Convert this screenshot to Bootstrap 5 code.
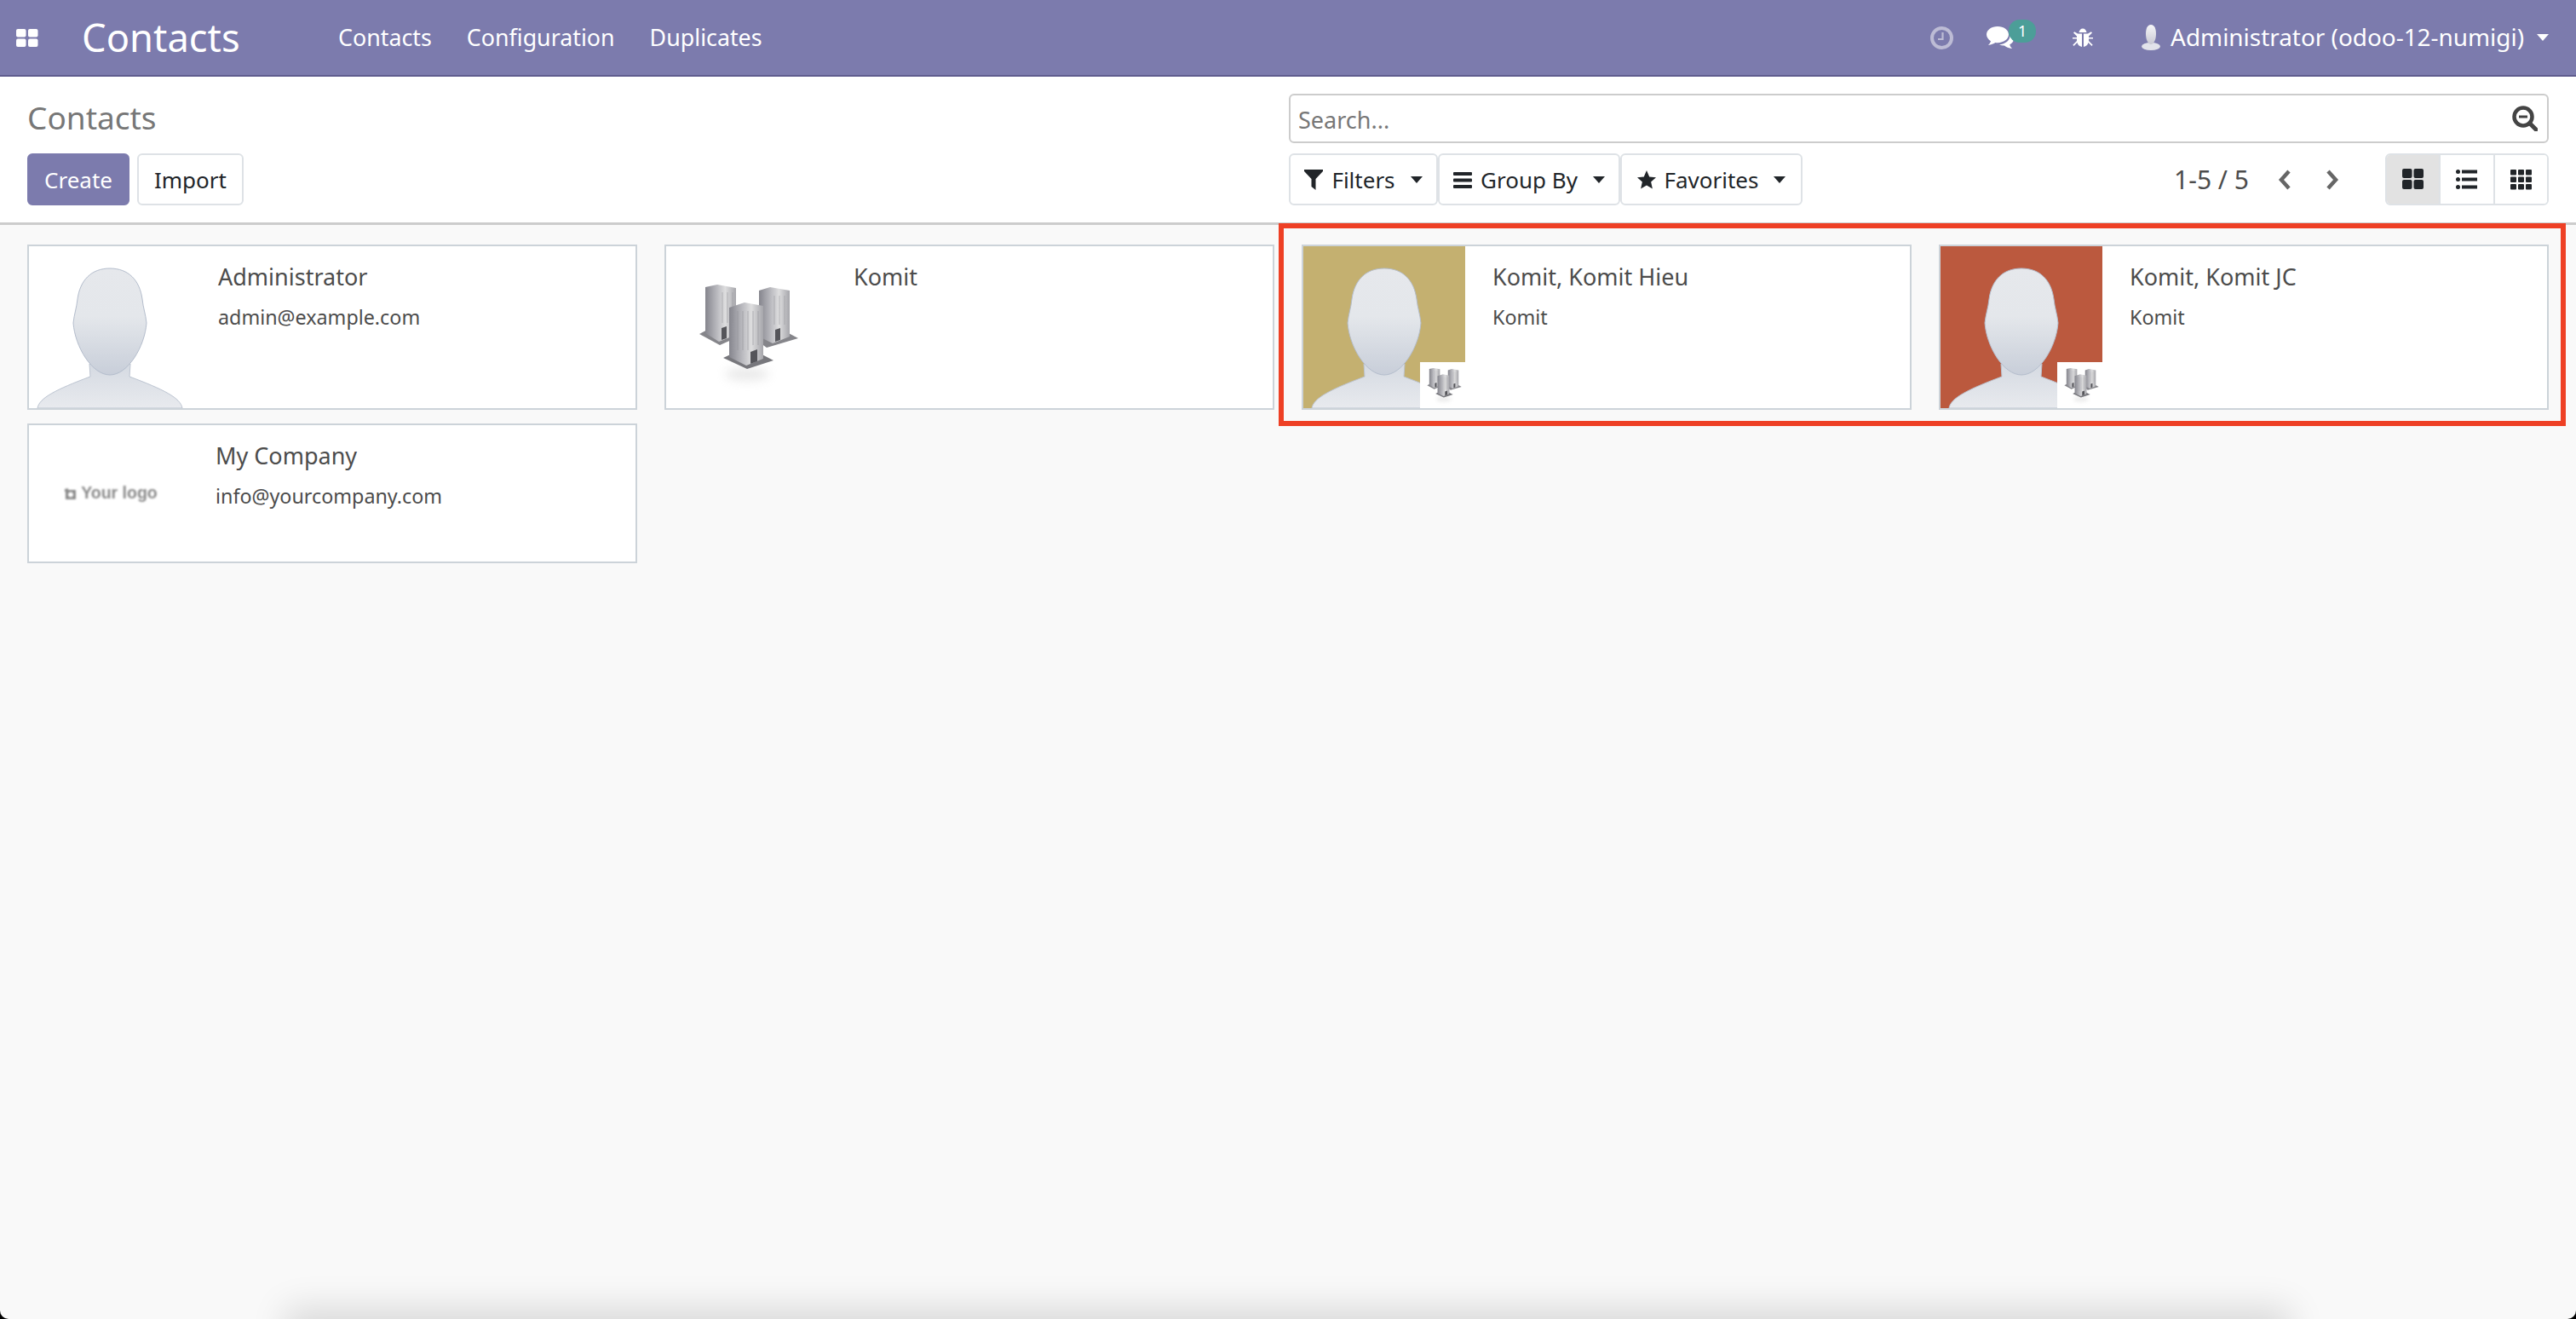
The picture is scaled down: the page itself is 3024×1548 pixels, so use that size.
<!DOCTYPE html>
<html lang="en">
<head>
<meta charset="utf-8">
<title>Contacts</title>
<link href="https://cdn.jsdelivr.net/npm/bootstrap@5.3.0/dist/css/bootstrap.min.css" rel="stylesheet">
<style>
html{background:#000}
body{margin:0;width:3024px;height:1548px;overflow:hidden;background:#f9f9f9;font-family:"Noto Sans","Open Sans",sans-serif;color:#212529;position:relative;border-radius:0 0 10px 10px}
.topbar{height:90px;background:#7c7bad;border-bottom:2px solid #5f5c8e;color:#fff;padding:0 32px 0 19px;flex-wrap:nowrap}
.apps-ico{width:26px;height:21px;fill:#fff;display:block}
.app-name{font-size:45.300px;line-height:1;margin-left:51px;color:#fff;width:301px}
.menu-link{font-size:26.800px;color:#fff;text-decoration:none;margin-right:41px;line-height:1}
.clock-ico{width:27px;height:27px;display:block}
.tray-item{position:relative;display:block}
.chat-ico{width:32px;height:26px;fill:#fff;display:block;margin-left:39px}
.msg-count{position:absolute;left:65px;top:-8px;width:32px;height:27px;background:#4c9e98;border-radius:13px;color:#fff;font-size:18px;line-height:26px;text-align:center}
.bug-ico{width:24px;height:23px;fill:#fff;display:block;margin-left:69px}
.user-ico{width:26px;height:30px;display:block;margin-left:55px}
.user-name{font-size:27.900px;margin-left:10px;line-height:1}
.down-tri{width:14px;height:8px;display:block;flex:none}
.user-tri{margin-left:15px;fill:#fff}
.panel-top{height:174px;background:#fff;border-bottom:3px solid #ccc;padding:20px 0}
.panel-left{padding-left:32px}
.panel-right{padding-right:32px;padding-left:1px}
.line-a{height:58px;margin-bottom:12px}
.page-title{font-size:37px;color:#777;font-weight:400;margin:0;line-height:54px;padding-bottom:3px}
.act-btn{height:61px;font-size:26px;padding:0 18px;border-radius:6px;line-height:1;display:inline-flex;align-items:center;border:2px solid #dee2e6;background:#fff;color:#212529}
.act-main{background:#7c7bad;border-color:#7c7bad;color:#fff;margin-right:9px}
.search-wrap{height:58px;border:2px solid #ccc;border-radius:6px;padding:0 11px 0 9px;background:#fff}
.search-hint{font-size:27px;color:#777;line-height:1;padding-top:2px}
.search-ico{width:30px;height:30px;display:block}
.drop-btn{height:61px;font-size:26px;border:2px solid #dee2e6;border-radius:6px;background:#fff;color:#212529;display:flex;align-items:center;padding:0;justify-content:center;gap:10px;line-height:1}
.w-a{width:175px}.w-b{width:214px}.w-c{width:214px}
.drop-ico{width:22px;height:24px;fill:#212529;display:block;flex:none}
.drop-tri{fill:#212529;margin-left:8px}
.pager-text{font-size:30px;color:#4c4c4c;line-height:1;margin-right:34px;white-space:nowrap}
.chev{width:16px;height:24px;display:block}
.chev-next{margin-left:40px}
.view-box{margin-left:54px;border:2px solid #dee2e6;border-radius:6px;height:61px;overflow:hidden;display:flex;width:192px}
.view-cell{flex:1;display:flex;align-items:center;justify-content:center;border-left:2px solid #dee2e6;background:#fff}
.view-cell:first-child{border-left:0;background:#e2e2e2}
.view-ico{width:27px;height:27px;fill:#212529;display:block}
.kan-wrap{padding:23px 32px 0;gap:16px 32px;width:3024px}
.ct-card{width:716px;height:194px;background:#fff;border:2px solid #ccd3d9;display:flex;position:relative;flex:none;border-radius:0}
.ct-short{height:164px}
.ct-pic{width:190px;height:190px;flex:none;position:relative;display:block}
.pic-c{background:#c4b070}
.pic-d{background:#bb593e}
.ct-pic svg{display:block;width:190px;height:190px}
.corner-logo{position:absolute;right:-1px;bottom:0;width:54px;height:54px;background:#fff}
.corner-logo svg{width:54px;height:54px}
.ct-body{padding:21px 0 0 32px;color:#4c4c4c}
.ct-name{font-size:27px;line-height:30px;margin-bottom:17px}
.ct-sub{font-size:23.300px;line-height:30px}
.logo-slot{width:190px;height:160px;flex:none;display:flex;align-items:center;justify-content:center;color:#8a8a8a;font-family:"Liberation Sans",sans-serif;font-weight:700;font-size:19.500px;filter:blur(1px);gap:5px;padding-left:2px}
.logo-cam{width:15px;height:15px;fill:#8a8a8a;display:block}
.body-short{padding-left:29px}
.body-tight{padding-left:30px}
.callout{position:absolute;left:1501px;top:262px;width:1511px;height:238px;border:6px solid #ee4025;pointer-events:none}
.edge-shade{position:absolute;left:360px;right:360px;top:1560px;height:40px;box-shadow:0 0 40px 25px rgba(0,0,0,.13)}
</style>
</head>
<body>
<svg width="0" height="0" class="position-absolute">
<defs>
<linearGradient id="skin" x1="0" y1="0" x2="0" y2="1"><stop offset="0" stop-color="#e6e8ec"/><stop offset=".45" stop-color="#e4e7eb"/><stop offset="1" stop-color="#c8ced9"/></linearGradient>
<linearGradient id="skin2" x1="0" y1="0" x2="0" y2="1"><stop offset="0" stop-color="#d5dae2"/><stop offset="1" stop-color="#e8eaee"/></linearGradient>
<linearGradient id="twr" x1="0" y1="0" x2="1" y2="0"><stop offset="0" stop-color="#85858d"/><stop offset=".4" stop-color="#bcbcc1"/><stop offset=".65" stop-color="#dededf"/><stop offset="1" stop-color="#a6a6ab"/></linearGradient>
<filter id="soft" x="-50%" y="-80%" width="200%" height="260%"><feGaussianBlur stdDeviation="6"/></filter>
<symbol id="person" viewBox="0 0 190 190">
<path d="M10 190C12 178 32 168 72 153L71 138H119L118 153C158 168 178 178 180 190Z" fill="url(#skin2)" stroke="#bcc4d1" stroke-width="1"/>
<path d="M95 26C73 26 60 40 57 62C56 72 53 80 52 90C54 118 74 151 95 151C116 151 136 118 138 90C137 80 134 72 133 62C130 40 117 26 95 26Z" fill="url(#skin)" stroke="#b4bdcc" stroke-width="1"/>
</symbol>
<symbol id="towers" viewBox="0 0 190 190">
<ellipse cx="95" cy="150" rx="26" ry="8" fill="#bbb" opacity=".3" filter="url(#soft)"/>
<path d="M39 103L63 90L90 104L63 116Z" fill="#85858a"/>
<path d="M100 106L125 92L155 108L118 119Z" fill="#85858a"/>
<path d="M46 48L60 45L82 49V104L62 112L46 102Z" fill="url(#twr)"/>
<path d="M109 52L122 48L145 52V106L125 114L109 106Z" fill="url(#twr)"/>
<path d="M65 96L71 94V108L65 110ZM128 98L134 96V110L128 112Z" fill="#55555a"/>
<path d="M67 131L95 118L126 134L95 144Z" fill="#77777c"/>
<path d="M74 72L92 66L114 70V132L94 140L74 130Z" fill="url(#twr)"/>
<path d="M99 124L107 121V135L99 138Z" fill="#55555a"/>
<path d="M84 76V122M90 76V122M96 76V122M102 76V116M108 76V116" stroke="#8e8e94" stroke-width="1" opacity=".55"/>
<path d="M66 54V90M72 54V90M78 54V90M127 58V92M133 58V92M139 58V92" stroke="#8e8e94" stroke-width="1" opacity=".5"/>
</symbol>
<symbol id="tri" viewBox="0 0 14 8"><path d="M0 0H14L7 8Z"/></symbol>
</defs>
</svg>

<nav class="navbar topbar d-flex align-items-center justify-content-start">
  <svg class="apps-ico" viewBox="0 0 26 21"><rect x="0" y="0" width="11.500" height="9.500" rx="2"/><rect x="14" y="0" width="11.500" height="9.500" rx="2"/><rect x="0" y="11.500" width="11.500" height="9.500" rx="2"/><rect x="14" y="11.500" width="11.500" height="9.500" rx="2"/></svg>
  <span class="app-name">Contacts</span>
  <a class="menu-link" href="#">Contacts</a>
  <a class="menu-link" href="#">Configuration</a>
  <a class="menu-link" href="#">Duplicates</a>
  <div class="ms-auto d-flex align-items-center">
    <svg class="clock-ico" viewBox="0 0 27 27"><circle cx="13.500" cy="13.500" r="11.500" fill="none" stroke="#bdbcd5" stroke-width="4"/><path d="M14.500 7V15H9" fill="none" stroke="#bdbcd5" stroke-width="2.200"/></svg>
    <span class="tray-item">
      <svg class="chat-ico" viewBox="0 0 32 26"><path d="M13 0C5.800 0 0 4.200 0 9.600C0 12.800 2.100 15.500 5 17.200C4.600 18.800 3.600 20.400 2 22C5.600 21.600 8.400 20.400 10.400 19C11.300 19.100 12.100 19.200 13 19.200C20.200 19.200 26 15 26 9.600C26 4.200 20.200 0 13 0Z"/><path d="M27.500 9.500C28.500 16 22 21 15 21.200C17 22.200 19 22.600 21 22.500C23 24.200 26 25.500 30 26C28.500 24.600 27.600 23 27.300 21.300C30 19.800 32 17.600 32 15C32 12.800 30 10.800 27.500 9.500Z"/></svg>
      <span class="msg-count">1</span>
    </span>
    <svg class="bug-ico" viewBox="0 0 24 23"><path d="M7.500 5C8 2.300 9.700 .5 12 .5S16 2.300 16.500 5Z"/><path d="M6 6.500H11V22C8 21.500 6 19.500 5.500 17L1.500 21L.3 19.800L5 15V12.500H0V11H5V9.500L1 5.500L2.200 4.300ZM18 6.500H13V22C16 21.500 18 19.500 18.500 17L22.500 21L23.700 19.800L19 15V12.500H24V11H19V9.500L23 5.500L21.800 4.300Z"/></svg>
    <svg class="user-ico" viewBox="0 0 26 30"><defs><linearGradient id="uh" x1="0" y1="0" x2="0" y2="1"><stop offset="0" stop-color="#f6f6f8"/><stop offset="1" stop-color="#c9c9d3"/></linearGradient></defs><ellipse cx="13" cy="25.500" rx="11" ry="4.500" fill="#e2e3ea"/><path d="M13 0C8.500 0 7 5 7 11C7 17 9.500 23 13 23S19 17 19 11C19 5 17.500 0 13 0Z" fill="url(#uh)"/></svg>
    <span class="user-name">Administrator (odoo-12-numigi)</span>
    <svg class="down-tri user-tri"><use href="#tri"/></svg>
  </div>
</nav>

<header class="panel-top row g-0">
  <div class="col-6 panel-left">
    <div class="line-a d-flex align-items-center"><h1 class="page-title">Contacts</h1></div>
    <div class="d-flex">
      <button type="button" class="btn act-btn act-main">Create</button>
      <button type="button" class="btn act-btn">Import</button>
    </div>
  </div>
  <div class="col-6 panel-right">
    <div class="line-a search-wrap d-flex align-items-center justify-content-between">
      <span class="search-hint">Search...</span>
      <svg class="search-ico" viewBox="0 0 30 30"><circle cx="13" cy="13" r="10.500" fill="none" stroke="#444" stroke-width="4.500"/><path d="M20.500 20.500L28 28" stroke="#444" stroke-width="5" stroke-linecap="round"/><rect x="8" y="11.500" width="10" height="3" fill="#444"/></svg>
    </div>
    <div class="d-flex align-items-center">
      <button type="button" class="drop-btn w-a"><svg class="drop-ico" viewBox="0 0 22 24"><path d="M0 0H22V2L13.500 11V24L8.500 20V11L0 2Z"/></svg>Filters<svg class="down-tri drop-tri"><use href="#tri"/></svg></button>
      <button type="button" class="drop-btn w-b"><svg class="drop-ico" viewBox="0 0 22 24"><rect y="3" width="22" height="4" rx="1"/><rect y="10.500" width="22" height="4" rx="1"/><rect y="18" width="22" height="4" rx="1"/></svg>Group By<svg class="down-tri drop-tri"><use href="#tri"/></svg></button>
      <button type="button" class="drop-btn w-c"><svg class="drop-ico" viewBox="0 0 24 24"><path d="M12 0L15.500 8.200L24 9L17.600 14.800L19.500 23.500L12 19L4.500 23.500L6.400 14.800L0 9L8.500 8.200Z"/></svg>Favorites<svg class="down-tri drop-tri"><use href="#tri"/></svg></button>
      <div class="ms-auto d-flex align-items-center">
        <span class="pager-text">1-5 / 5</span>
        <svg class="chev" viewBox="0 0 16 24"><path d="M13 2L4 12L13 22" fill="none" stroke="#666" stroke-width="4.500"/></svg>
        <svg class="chev chev-next" viewBox="0 0 16 24"><path d="M3 2L12 12L3 22" fill="none" stroke="#666" stroke-width="4.500"/></svg>
        <div class="view-box">
          <span class="view-cell"><svg class="view-ico" viewBox="0 0 27 27"><rect x="1" y="1" width="11.500" height="11" rx="2"/><rect x="14.500" y="1" width="11.500" height="11" rx="2"/><rect x="1" y="14" width="11.500" height="11" rx="2"/><rect x="14.500" y="14" width="11.500" height="11" rx="2"/></svg></span>
          <span class="view-cell"><svg class="view-ico" viewBox="0 0 27 27"><circle cx="3.500" cy="4.500" r="2.500"/><circle cx="3.500" cy="13.500" r="2.500"/><circle cx="3.500" cy="22.500" r="2.500"/><rect x="8" y="2.500" width="18" height="4"/><rect x="8" y="11.500" width="18" height="4"/><rect x="8" y="20.500" width="18" height="4"/></svg></span>
          <span class="view-cell"><svg class="view-ico" viewBox="0 0 27 27"><rect x="1" y="2" width="7" height="6.500" rx="1"/><rect x="10" y="2" width="7" height="6.500" rx="1"/><rect x="19" y="2" width="7" height="6.500" rx="1"/><rect x="1" y="10.500" width="7" height="6.500" rx="1"/><rect x="10" y="10.500" width="7" height="6.500" rx="1"/><rect x="19" y="10.500" width="7" height="6.500" rx="1"/><rect x="1" y="19" width="7" height="6.500" rx="1"/><rect x="10" y="19" width="7" height="6.500" rx="1"/><rect x="19" y="19" width="7" height="6.500" rx="1"/></svg></span>
        </div>
      </div>
    </div>
  </div>
</header>

<main class="kan-wrap d-flex flex-wrap align-items-start">
  <article class="ct-card">
    <span class="ct-pic"><svg><use href="#person"/></svg></span>
    <div class="ct-body"><div class="ct-name">Administrator</div><div class="ct-sub">admin@example.com</div></div>
  </article>
  <article class="ct-card">
    <span class="ct-pic"><svg><use href="#towers"/></svg></span>
    <div class="ct-body body-tight"><div class="ct-name">Komit</div></div>
  </article>
  <article class="ct-card">
    <span class="ct-pic pic-c"><svg><use href="#person"/></svg><span class="corner-logo"><svg viewBox="15 25 155 155"><use href="#towers" width="190" height="190"/></svg></span></span>
    <div class="ct-body"><div class="ct-name">Komit, Komit Hieu</div><div class="ct-sub">Komit</div></div>
  </article>
  <article class="ct-card">
    <span class="ct-pic pic-d"><svg><use href="#person"/></svg><span class="corner-logo"><svg viewBox="15 25 155 155"><use href="#towers" width="190" height="190"/></svg></span></span>
    <div class="ct-body"><div class="ct-name">Komit, Komit JC</div><div class="ct-sub">Komit</div></div>
  </article>
  <article class="ct-card ct-short">
    <div class="logo-slot"><svg class="logo-cam" viewBox="0 0 15 15"><path d="M1 2L5 1V3H14V14H2V5H1ZM8 5.500A3 3 0 1 0 8 11.500A3 3 0 1 0 8 5.500Z"/></svg><span>Your logo</span></div>
    <div class="ct-body body-short"><div class="ct-name">My Company</div><div class="ct-sub">info@yourcompany.com</div></div>
  </article>
</main>

<div class="callout"></div>
<div class="edge-shade"></div>
</body>
</html>
